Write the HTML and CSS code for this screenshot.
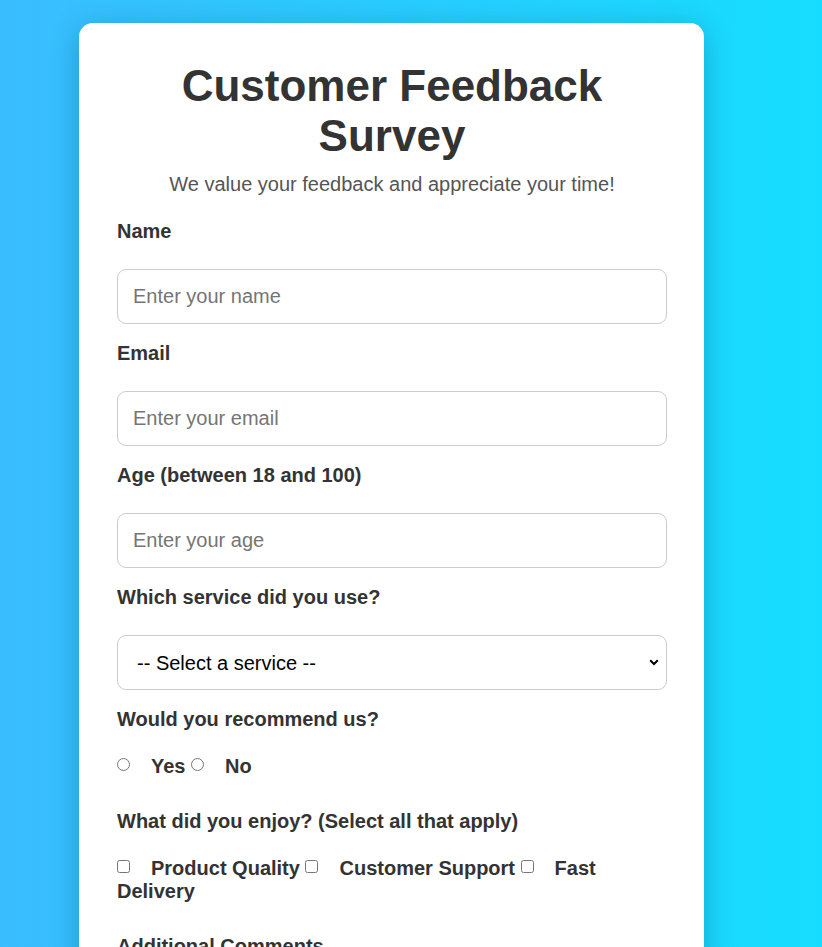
FILE: index.html
```html
<!DOCTYPE html>
<html lang="en">
<head>
<meta charset="UTF-8">
<title>Customer Feedback Survey</title>
<link rel="stylesheet" href="styles.css">
</head>
<body>
<div class="card">
  <h1 class="title">Customer Feedback Survey</h1>
  <p class="subtitle">We value your feedback and appreciate your time!</p>
  <form class="form">
    <label class="label" for="name">Name</label>
    <input class="field" id="name" type="text" placeholder="Enter your name">
    <label class="label" for="email">Email</label>
    <input class="field" id="email" type="email" placeholder="Enter your email">
    <label class="label" for="age">Age (between 18 and 100)</label>
    <input class="field" id="age" type="number" placeholder="Enter your age">
    <label class="label" for="service">Which service did you use?</label>
    <div class="select-wrap">
      <select class="field select" id="service">
        <option>-- Select a service --</option>
      </select>
      <svg class="chevron" width="10" height="7" viewBox="0 0 10 7" aria-hidden="true"><path d="M1.2 1.3 L5 5 L8.8 1.3" fill="none" stroke="#000" stroke-width="2"/></svg>
    </div>
    <label class="label group-label">Would you recommend us?</label>
    <div class="choices radios">
      <input class="radio" type="radio" name="rec" id="yes"><label class="opt" for="yes">Yes</label>
      <input class="radio" type="radio" name="rec" id="no"><label class="opt" for="no">No</label>
    </div>
    <label class="label group-label">What did you enjoy? (Select all that apply)</label>
    <div class="choices checks">
      <input class="check" type="checkbox" id="q"><label class="opt" for="q">Product Quality</label>
      <input class="check" type="checkbox" id="s"><label class="opt" for="s">Customer Support</label>
      <input class="check" type="checkbox" id="d"><label class="opt" for="d">Fast Delivery</label>
    </div>
    <label class="label" for="comments">Additional Comments</label>
    <textarea class="field area" id="comments" placeholder="Write your comments here"></textarea>
  </form>
</div>
</body>
</html>
```
FILE: styles.css
```css
html, body {
  margin: 0;
  padding: 0;
}
body {
  font-family: "Liberation Sans", Arial, sans-serif;
  background: linear-gradient(to right, #3abdff, #16ddff);
  min-height: 100vh;
  color: #333;
}
.card {
  width: 625px;
  box-sizing: border-box;
  margin: 23px 0 40px 79px;
  background: #fff;
  border-radius: 14px;
  padding: 38px 37px 40px 38px;
  box-shadow: 0 6px 30px rgba(0, 40, 80, 0.28);
}
.title {
  margin: 0;
  font-size: 44px;
  line-height: 50px;
  text-align: center;
  color: #333;
  font-weight: bold;
}
.subtitle {
  margin: 12px 0 0;
  text-align: center;
  font-size: 20px;
  color: #555;
}
.form {
  margin-top: 24px;
}
.label {
  display: block;
  font-weight: bold;
  font-size: 20px;
  line-height: 23px;
  margin: 0 0 26px;
  color: #333;
}
.group-label {
  margin-bottom: 24px;
}
.field {
  display: block;
  width: 100%;
  box-sizing: border-box;
  height: 55px;
  padding: 0 15px;
  font-family: "Liberation Sans", Arial, sans-serif;
  font-size: 20px;
  border: 1px solid #ccc;
  border-radius: 9px;
  margin: 0 0 18px;
  color: #333;
  background: #fff;
}
.field::placeholder {
  color: #757575;
}
.select-wrap {
  position: relative;
}
.select {
  -webkit-appearance: none;
  appearance: none;
  padding: 0 30px 0 19px;
  color: #000;
}
.chevron {
  position: absolute;
  left: 532px;
  top: 24px;
  pointer-events: none;
}
.choices {
  font-size: 20px;
  font-weight: bold;
  line-height: 23px;
  margin: 0 0 32px;
}
.radio, .check {
  margin: 0;
  width: 13px;
  height: 13px;
  vertical-align: 2px;
}
.opt {
  margin-left: 21px;
}
.area {
  height: 120px;
  padding-top: 12px;
}
```
